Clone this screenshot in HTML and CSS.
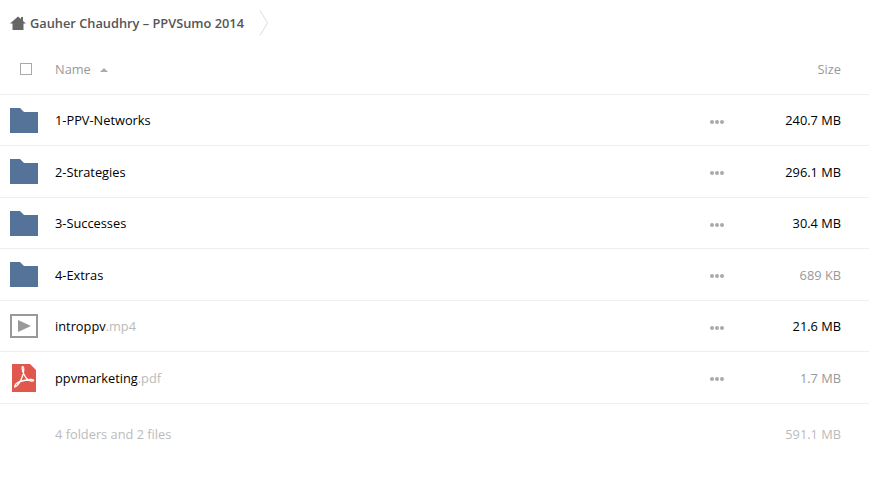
FILE: index.html
```html
<!DOCTYPE html>
<html lang="en">
<head>
    <meta charset="utf-8" />
    <title>Gauher Chaudhry – PPVSumo 2014</title>
    <link rel="stylesheet" href="styles.css">
</head>
<body>
    <div class="crumbs">
        <svg class="home-icon" width="16" height="14" viewBox="0 0 16 14">
            <path d="M0 7.500 8 .5l3 2.600V1h2v3.900l3 2.600H13.500V14H2.500V7.500z" fill="#666" />
        </svg>
        <span class="crumb-name">Gauher Chaudhry – PPVSumo 2014</span>
        <svg class="crumb-sep" width="10" height="26" viewBox="0 0 10 26">
            <path d="M1 .5l7.500 12.500L1 25.500" fill="none" stroke="#ddd" />
        </svg>
    </div>

    <div class="head-row">
        <div class="col-icon"><span class="check"></span></div>
        <div class="col-name head-name">Name <span class="sort-up"></span></div>
        <div class="col-size">Size</div>
    </div>

    <div class="row">
        <div class="col-icon">
            <svg width="28" height="25" viewBox="0 0 28 25"><path class="folder" d="M0 0h10l4 4h14v21H0z" /></svg>
        </div>
        <div class="col-name">1-PPV-Networks</div>
        <div class="more"><i></i><i></i><i></i></div>
        <div class="col-size">240.7 MB</div>
    </div>
    <div class="row">
        <div class="col-icon">
            <svg width="28" height="25" viewBox="0 0 28 25"><path class="folder" d="M0 0h10l4 4h14v21H0z" /></svg>
        </div>
        <div class="col-name">2-Strategies</div>
        <div class="more"><i></i><i></i><i></i></div>
        <div class="col-size">296.1 MB</div>
    </div>
    <div class="row">
        <div class="col-icon">
            <svg width="28" height="25" viewBox="0 0 28 25"><path class="folder" d="M0 0h10l4 4h14v21H0z" /></svg>
        </div>
        <div class="col-name">3-Successes</div>
        <div class="more"><i></i><i></i><i></i></div>
        <div class="col-size">30.4 MB</div>
    </div>
    <div class="row">
        <div class="col-icon">
            <svg width="28" height="25" viewBox="0 0 28 25"><path class="folder" d="M0 0h10l4 4h14v21H0z" /></svg>
        </div>
        <div class="col-name">4-Extras</div>
        <div class="more"><i></i><i></i><i></i></div>
        <div class="col-size muted">689 KB</div>
    </div>
    <div class="row">
        <div class="col-icon">
            <svg width="28" height="24" viewBox="0 0 28 24">
                <rect x="1" y="1" width="26" height="22" fill="#fff" stroke="#999" stroke-width="2" />
                <path d="M8 6l13 6-13 6z" fill="#999" />
            </svg>
        </div>
        <div class="col-name">introppv<span class="ext">.mp4</span></div>
        <div class="more"><i></i><i></i><i></i></div>
        <div class="col-size">21.6 MB</div>
    </div>
    <div class="row">
        <div class="col-icon">
            <svg class="pdf-icon" width="24" height="28" viewBox="0 0 24 28">
                <path d="M0 0h18l6 6v22H0z" fill="#e2574c" />
                <path d="M3 23c3-1.500 6-6 8-12.500.7-2.500 1.300-7.500 0-8-1.500-.5-1 4 1 8s5 6.500 8 6.500 1.500-2-2-1.500-10 1.500-13 3.500c-1.500 1-3 4-2 3.500z" fill="none" stroke="#fff" stroke-width="1.300" />
            </svg>
        </div>
        <div class="col-name">ppvmarketing<span class="ext">.pdf</span></div>
        <div class="more"><i></i><i></i><i></i></div>
        <div class="col-size muted">1.7 MB</div>
    </div>

    <div class="summary">
        <div class="col-icon"></div>
        <div class="col-name">4 folders and 2 files</div>
        <div class="col-size">591.1 MB</div>
    </div>
</body>
</html>
```

FILE: styles.css
```css
* {
    margin: 0;
    padding: 0;
    box-sizing: border-box;
}

html {
    font-family: 'Open Sans', 'Liberation Sans', sans-serif;
}

body {
    background: #fff;
    color: #000;
    font-size: 12.8px;
    overflow: hidden;
}

.crumbs {
    display: flex;
    align-items: center;
    height: 46px;
    padding-left: 10px;
}

.crumb-name {
    margin-left: 4px;
    color: #555;
    font-weight: 600;
    font-size: 12.8px;
}

.crumb-sep {
    margin-left: 15px;
}

.head-row,
.row,
.summary {
    display: flex;
    align-items: center;
    padding-right: 28px;
}

.head-row {
    height: 48.9px;
    padding-bottom: 2px;
    border-bottom: 1px solid #eee;
    color: #999;
}

.row {
    height: 51.5px;
    border-bottom: 1px solid #eee;
}

.summary {
    height: 60px;
    color: #bbb;
}

.col-icon {
    display: flex;
    align-items: center;
    flex: none;
    width: 55px;
    padding-left: 10px;
}

.pdf-icon {
    margin-left: 2px;
}

.col-name {
    flex: 1;
}

.head-name {
    color: #999;
}

.col-size {
    flex: none;
    width: 116px;
    text-align: right;
}

.muted {
    color: #999;
}

.ext {
    color: #bbb;
}

.check {
    display: block;
    width: 12px;
    height: 12px;
    margin-left: 10px;
    border: 1px solid #aaa;
}

.sort-up {
    display: inline-block;
    width: 0;
    height: 0;
    margin-left: 6px;
    vertical-align: 2px;
    border-left: 4px solid transparent;
    border-right: 4px solid transparent;
    border-bottom: 4px solid #aaa;
}

.folder {
    fill: #557299;
}

.more {
    display: flex;
    gap: 1px;
    flex: none;
    margin-right: 1px;
    padding-top: 3px;
}

.more i {
    display: block;
    width: 4px;
    height: 4px;
    border-radius: 50%;
    background: #aaa;
}
```
